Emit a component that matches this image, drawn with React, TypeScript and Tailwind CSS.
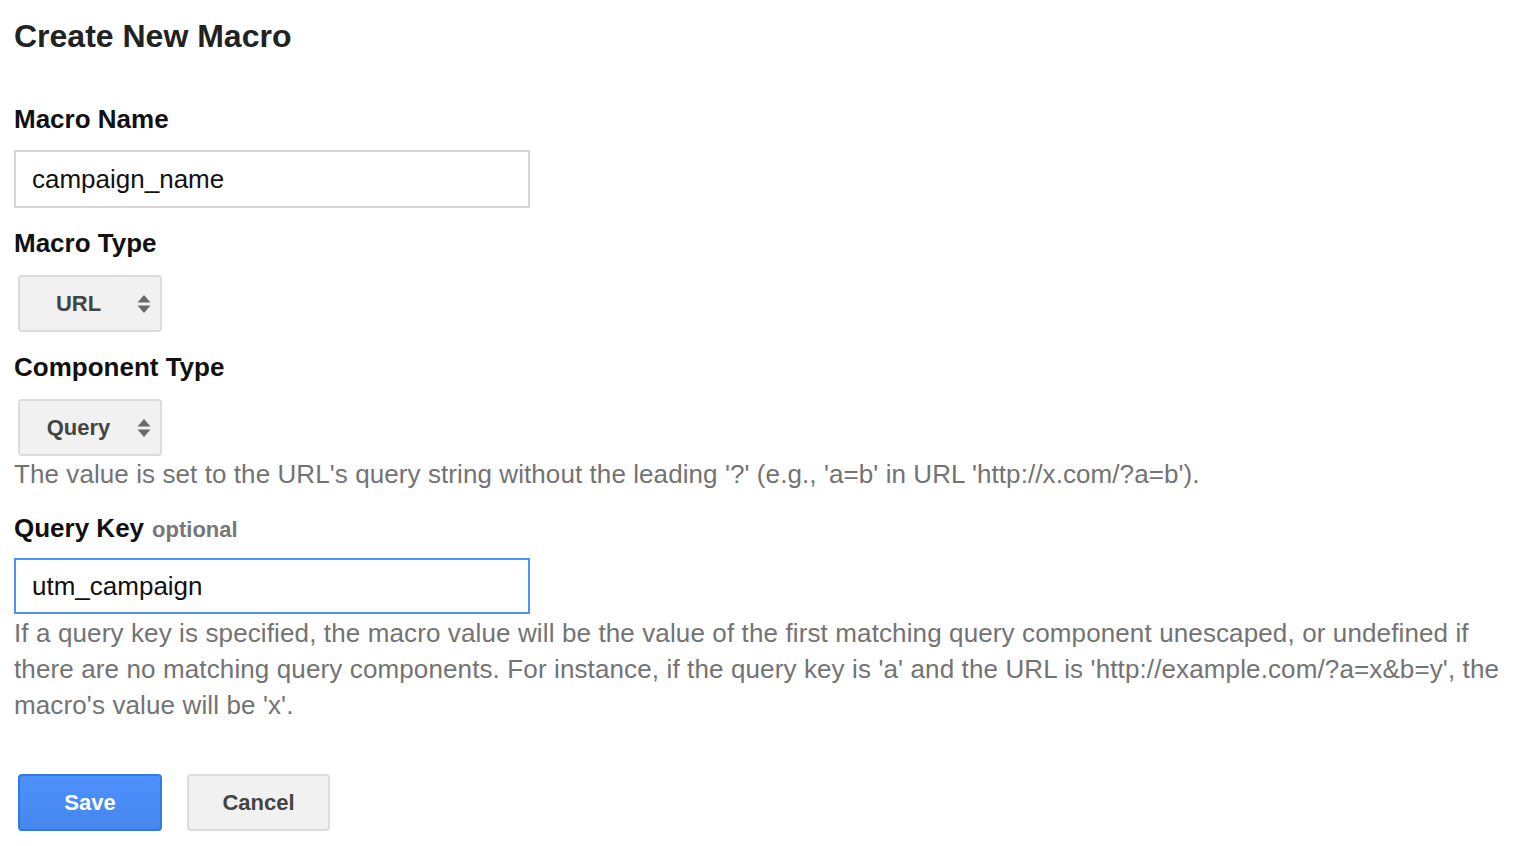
import React from "react";

function SelectArrows() {
  return (
    <svg width="14" height="22" viewBox="0 0 14 22" className="shrink-0">
      <path d="M7 2 L13.5 9.5 L0.5 9.5 Z" fill="#6a6a6a" />
      <path d="M7 20 L13.5 12.5 L0.5 12.5 Z" fill="#6a6a6a" />
    </svg>
  );
}

function FakeSelect({ value }: { value: string }) {
  return (
    <div className="ml-[4px] flex h-[57px] w-[144px] items-center rounded-[4px] border-2 border-[#dcdcdc] bg-[#f1f1f1] pr-[9px]">
      <span className="flex-1 text-center text-[22px] font-bold text-[#444]">{value}</span>
      <SelectArrows />
    </div>
  );
}

function Label({ children }: { children: React.ReactNode }) {
  return (
    <div className="flex h-[30px] items-baseline gap-[8px] text-[26px] font-bold leading-[30px] text-[#111]">
      {children}
    </div>
  );
}

export default function App() {
  return (
    <div
      className="min-h-screen bg-white px-[14px] pt-[18px]"
      style={{ fontFamily: '"Liberation Sans", Arial, sans-serif' }}
    >
      <h1 className="text-[32px] font-bold leading-[36px] text-[#222]">Create New Macro</h1>

      <div className="mt-[50px]">
        <Label>Macro Name</Label>
      </div>
      <div className="mt-[16px] flex h-[58px] w-[516px] items-center border-2 border-[#d6d6d6] px-[16px] text-[26px] text-[#111]">
        campaign_name
      </div>

      <div className="mt-[20px]">
        <Label>Macro Type</Label>
      </div>
      <div className="mt-[17px]">
        <FakeSelect value="URL" />
      </div>

      <div className="mt-[20px]">
        <Label>Component Type</Label>
      </div>
      <div className="mt-[17px]">
        <FakeSelect value="Query" />
      </div>
      <p className="text-[26px] leading-[36px] tracking-[0.08px] text-[#737373]">
        The value is set to the URL's query string without the leading '?' (e.g., 'a=b' in URL 'http://x.com/?a=b').
      </p>

      <div className="mt-[21px]">
        <Label>
          <span>Query Key</span>
          <span className="text-[22px] leading-[30px] text-[#777]">optional</span>
        </Label>
      </div>
      <div className="mt-[15px] flex h-[56px] w-[516px] items-center border-2 border-[#4d90fe] px-[16px] text-[26px] text-[#111]">
        utm_campaign
      </div>
      <p className="mt-[1px] text-[26px] leading-[36px] tracking-[0.12px] text-[#737373]">
        If a query key is specified, the macro value will be the value of the first matching query component unescaped, or undefined if there are no matching query components. For instance, if the query key is 'a' and the URL is 'http://example.com/?a=x&amp;b=y', the macro's value will be 'x'.
      </p>

      <div className="mt-[51px] flex gap-[25px] pl-[4px]">
        <button className="h-[57px] w-[144px] rounded-[4px] border-2 border-[#3079ed] bg-gradient-to-b from-[#4d90fe] to-[#4787ed] text-[22px] font-bold text-white">
          Save
        </button>
        <button className="h-[57px] w-[143px] rounded-[4px] border-2 border-[#dcdcdc] bg-[#f1f1f1] text-[22px] font-bold text-[#444]">
          Cancel
        </button>
      </div>
    </div>
  );
}
